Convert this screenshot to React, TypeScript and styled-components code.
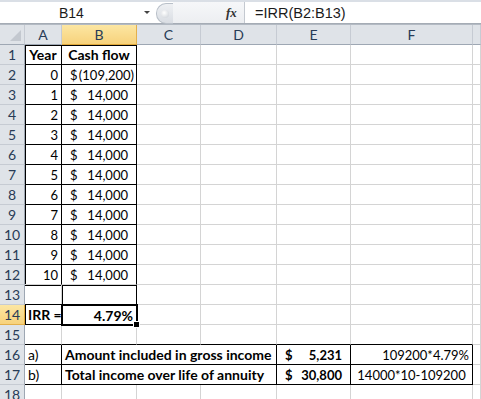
import React from "react";
import styled, { createGlobalStyle, css } from "styled-components";

const GlobalStyle = createGlobalStyle`
  html, body {
    margin: 0;
    padding: 0;
    background: #ffffff;
  }
  body {
    font-family: Lato, "Liberation Sans", sans-serif;
    font-size: 14px;
    color: #000000;
  }
`;

const GRID = "#d4d4d4";
const HEAD_LINE = "#c6cbd3";

const Page = styled.div`
  width: 481px;
  height: 399px;
  overflow: hidden;
  display: flex;
  flex-direction: column;
`;

/* ---------- formula bar ---------- */

const FormulaBar = styled.div`
  display: flex;
  height: 21px;
  border-top: 2px solid #dadfe6;
  border-bottom: 1px solid #a5acb5;
  background: #ffffff;
`;

const NameBox = styled.div`
  width: 156px;
  display: flex;
  align-items: center;
  position: relative;
  font-family: "Liberation Sans", Arial, sans-serif;
  font-size: 14px;
  color: #1b1b1b;
  span {
    margin-left: 59px;
  }
`;

const DropArrow = styled.div`
  position: absolute;
  right: 6px;
  top: 9px;
  width: 0;
  height: 0;
  border-left: 3px solid transparent;
  border-right: 3px solid transparent;
  border-top: 3px solid #444;
`;

const Knob = styled.div`
  width: 16px;
  height: 19px;
  margin-top: 1px;
  border-radius: 10px 0 0 10px;
  background: linear-gradient(#eef0f3, #d9dde3);
  border: 1px solid #b9c0c9;
  border-right: none;
  display: flex;
  align-items: center;
  justify-content: center;
  &::after {
    content: "";
    width: 8px;
    height: 8px;
    border-radius: 50%;
    background: radial-gradient(circle at 40% 35%, #ffffff, #c9ced5);
  }
`;

const Spacer = styled.div`
  width: 53px;
  background: linear-gradient(#f6f7f9, #eceef1);
`;

const FxLabel = styled.div`
  width: 18px;
  display: flex;
  align-items: center;
  font-family: "Liberation Serif", serif;
  font-style: italic;
  font-weight: bold;
  font-size: 13px;
  color: #333;
  background: linear-gradient(#f6f7f9, #eceef1);
`;

const FormulaInput = styled.div`
  flex: 1;
  display: flex;
  align-items: center;
  padding-left: 10px;
  border-left: 1px solid #c4c9d0;
  font-family: "Liberation Sans", Arial, sans-serif;
  font-size: 14.5px;
  color: #1b1b1b;
`;

const Band = styled.div`
  height: 2px;
  background: #e8ebef;
  border-bottom: 1px solid #b3bac3;
`;

/* ---------- sheet ---------- */

const Sheet = styled.div`
  display: grid;
  grid-template-columns: 25px 37px 75px 64px 76px 74px 122px 1fr;
  grid-auto-rows: 20px;
`;

const Corner = styled.div`
  background: #dfe3e8;
  border-right: 1px solid ${HEAD_LINE};
  border-bottom: 1px solid #9ea7b3;
  position: relative;
  &::after {
    content: "";
    position: absolute;
    right: 3px;
    bottom: 3px;
    width: 0;
    height: 0;
    border-left: 11px solid transparent;
    border-bottom: 11px solid #c3c8cf;
  }
`;

const ColHead = styled.div<{ $sel?: boolean }>`
  display: flex;
  align-items: center;
  justify-content: center;
  font-size: 14px;
  color: #283b56;
  background: #dfe3e8;
  border-right: 1px solid ${HEAD_LINE};
  border-bottom: 1px solid #9ea7b3;
  ${(p) =>
    p.$sel &&
    css`
      background: linear-gradient(#fce6a2, #f7d27c);
      border-right-color: #e3b04c;
      border-bottom-color: #e0a83a;
    `}
`;

const RowHead = styled.div<{ $sel?: boolean }>`
  display: flex;
  align-items: center;
  justify-content: center;
  font-size: 14px;
  color: #283b56;
  background: #dfe3e8;
  border-right: 1px solid #9ea7b3;
  border-bottom: 1px solid ${HEAD_LINE};
  ${(p) =>
    p.$sel &&
    css`
      background: linear-gradient(#fce6a2, #f7d27c);
      border-bottom-color: #e3b04c;
      border-right-color: #e0a83a;
    `}
`;

type Align = "left" | "center" | "right";

const Cell = styled.div<{
  $align?: Align;
  $bold?: boolean;
  $num?: boolean;
  $span?: number;
  $r?: boolean;
  $b?: boolean;
  $l?: boolean;
  $t?: boolean;
}>`
  display: flex;
  align-items: center;
  padding: 0 3px;
  white-space: nowrap;
  overflow: visible;
  font-size: ${(p) => (p.$num ? "13px" : "14px")};
  border-right: 1px solid ${(p) => (p.$r ? "#000" : GRID)};
  border-bottom: 1px solid ${(p) => (p.$b ? "#000" : GRID)};
  justify-content: ${(p) =>
    p.$align === "right" ? "flex-end" : p.$align === "center" ? "center" : "flex-start"};
  font-weight: ${(p) => (p.$bold ? 700 : 400)};
  grid-column: ${(p) => (p.$span ? `span ${p.$span}` : "auto")};
  box-shadow: ${(p) =>
    [p.$l ? "inset 1px 0 0 #000" : "", p.$t ? "inset 0 1px 0 #000" : ""]
      .filter(Boolean)
      .join(", ") || "none"};
`;

const Money = styled(Cell)`
  justify-content: space-between;
  font-size: 13px;
  padding: 0 ${(p) => (p.$align === "right" ? "2px" : "8px")} 0 8px;
`;

const Selected = styled(Cell)`
  position: relative;
  border: none;
  outline: 2px solid #000;
  outline-offset: -1px;
  padding-right: 4px;
  &::after {
    content: "";
    position: absolute;
    right: -3px;
    bottom: -3px;
    width: 5px;
    height: 5px;
    background: #000;
    border: 1px solid #fff;
  }
`;

const cashFlows = Array.from({ length: 10 }, (_, i) => ({ year: i + 1, amount: "14,000" }));

const App = () => {
  return (
    <Page>
      <GlobalStyle />
      <FormulaBar>
        <NameBox>
          <span>B14</span>
          <DropArrow />
        </NameBox>
        <Knob />
        <Spacer />
        <FxLabel>fx</FxLabel>
        <FormulaInput>=IRR(B2:B13)</FormulaInput>
      </FormulaBar>
      <Band />
      <Sheet>
        <Corner />
        <ColHead>A</ColHead>
        <ColHead $sel>B</ColHead>
        <ColHead>C</ColHead>
        <ColHead>D</ColHead>
        <ColHead>E</ColHead>
        <ColHead>F</ColHead>
        <ColHead />

        <RowHead>1</RowHead>
        <Cell $align="center" $bold $r $b $l $t>Year</Cell>
        <Cell $align="center" $bold $r $b $t>Cash flow</Cell>
        <Cell />
        <Cell />
        <Cell />
        <Cell />
        <Cell />

        <RowHead>2</RowHead>
        <Cell $align="right" $num $r $b $l>0</Cell>
        <Money $align="right" $r $b>
          <span>$</span>
          <span>(109,200)</span>
        </Money>
        <Cell />
        <Cell />
        <Cell />
        <Cell />
        <Cell />

        {cashFlows.map((row) => (
          <React.Fragment key={row.year}>
            <RowHead>{row.year + 2}</RowHead>
            <Cell $align="right" $num $r $b={row.year < 10} $l>{row.year}</Cell>
            <Money $r $b={row.year < 10}>
              <span>$</span>
              <span>{row.amount}</span>
            </Money>
            <Cell />
            <Cell />
            <Cell />
            <Cell />
            <Cell />
          </React.Fragment>
        ))}

        <RowHead>13</RowHead>
        <Cell $b $t />
        <Cell $r $l $t />
        <Cell />
        <Cell />
        <Cell />
        <Cell />
        <Cell />

        <RowHead $sel>14</RowHead>
        <Cell $bold $b $l>IRR =</Cell>
        <Selected $align="right" $bold>4.79%</Selected>
        <Cell />
        <Cell />
        <Cell />
        <Cell />
        <Cell />

        <RowHead>15</RowHead>
        <Cell $b />
        <Cell $b />
        <Cell $b />
        <Cell $b />
        <Cell $b />
        <Cell $b />
        <Cell />

        <RowHead>16</RowHead>
        <Cell $r $b>a)</Cell>
        <Cell $span={3} $bold $r $b>Amount included in gross income</Cell>
        <Money $bold $r $b>
          <span>$</span>
          <span>5,231</span>
        </Money>
        <Cell $align="right" $num $r $b>109200*4.79%</Cell>
        <Cell />

        <RowHead>17</RowHead>
        <Cell $r $b>b)</Cell>
        <Cell $span={3} $bold $r $b>Total income over life of annuity</Cell>
        <Money $bold $r $b>
          <span>$</span>
          <span>30,800</span>
        </Money>
        <Cell $align="center" $num $r $b>14000*10-109200</Cell>
        <Cell />

        <RowHead>18</RowHead>
        <Cell />
        <Cell />
        <Cell />
        <Cell />
        <Cell />
        <Cell />
        <Cell />
      </Sheet>
    </Page>
  );
};

export default App;
